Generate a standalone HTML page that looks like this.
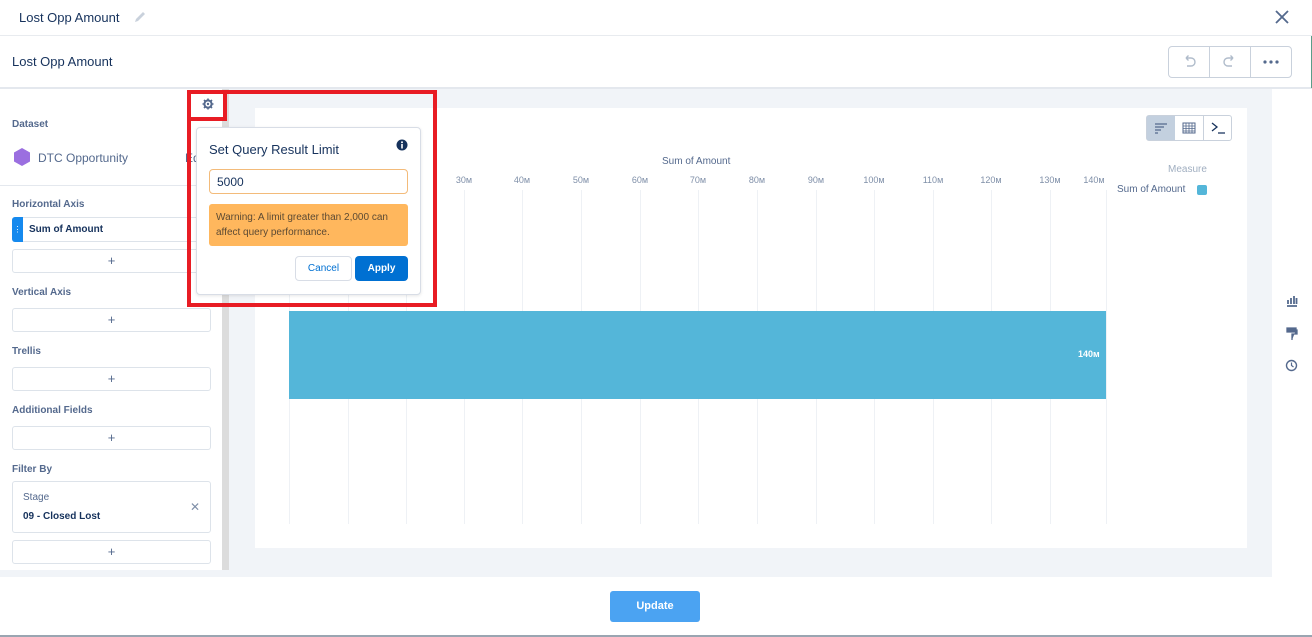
<!DOCTYPE html>
<html><head><meta charset="utf-8"><style>
*{box-sizing:border-box;margin:0;padding:0}
body{width:1312px;height:637px;position:relative;overflow:hidden;background:#fff;font-family:"Liberation Sans",sans-serif;color:#16325c}
.abs{position:absolute}
.lbl{position:absolute;left:12px;font-size:10px;color:#54698d;font-weight:bold}
.box{position:absolute;left:12px;width:199px;border:1px solid #dde3ea;border-radius:3px;background:#fff}
.plus{height:24px;text-align:center;line-height:22px;font-size:13px;color:#54698d}
.grid{position:absolute;top:190px;width:1px;height:334px;background:#eef1f5}
.tick{position:absolute;top:175px;font-size:9px;color:#7f8fa8;width:40px;text-align:center}
</style></head><body>
<div class="abs" style="left:19px;top:10px;font-size:13px;color:#16325c">Lost Opp Amount</div>
<svg class="abs" style="left:134px;top:11px" width="12" height="12" viewBox="0 0 12 12"><path d="M1 11 L2 8 L9 1 L11 3 L4 10 Z" fill="#c9d1dc"/></svg>
<svg class="abs" style="left:1275px;top:10px" width="14" height="14" viewBox="0 0 14 14"><path d="M1 1 L13 13 M13 1 L1 13" stroke="#54698d" stroke-width="1.8"/></svg>
<div class="abs" style="left:0;top:35px;width:1312px;height:1px;background:#e8ebef"></div>
<div class="abs" style="left:12px;top:54px;font-size:13px;color:#16325c">Lost Opp Amount</div>
<div class="abs" style="left:1168px;top:46px;width:124px;height:32px;border:1px solid #c9d1dc;border-radius:4px;background:#fff"></div>
<div class="abs" style="left:1209px;top:46px;width:1px;height:32px;background:#c9d1dc"></div>
<div class="abs" style="left:1250px;top:46px;width:1px;height:32px;background:#c9d1dc"></div>
<svg class="abs" style="left:1181px;top:54px" width="16" height="16" viewBox="0 0 16 16"><path d="M5 4 H10 A4 4 0 0 1 10 12 H6 M5 4 L7.5 1.5 M5 4 L7.5 6.5" stroke="#b0bccb" stroke-width="1.4" fill="none"/></svg>
<svg class="abs" style="left:1222px;top:54px" width="16" height="16" viewBox="0 0 16 16"><path d="M11 4 H6 A4 4 0 0 0 6 12 H10 M11 4 L8.5 1.5 M11 4 L8.5 6.5" stroke="#b0bccb" stroke-width="1.4" fill="none"/></svg>
<svg class="abs" style="left:1262px;top:59px" width="18" height="6"><circle cx="3" cy="3" r="1.6" fill="#54698d"/><circle cx="9" cy="3" r="1.6" fill="#54698d"/><circle cx="15" cy="3" r="1.6" fill="#54698d"/></svg>
<div class="abs" style="left:0;top:87px;width:1312px;height:2px;background:#e4e8ee"></div>
<div class="abs" style="left:0;top:89px;width:1272px;height:488px;background:#f1f4f8"></div>
<div class="abs" style="left:1272px;top:89px;width:40px;height:488px;background:#fff"></div>
<div class="abs" style="left:1311px;top:36px;width:1px;height:52px;background:#5a9e8a"></div>
<div class="abs" style="left:0;top:89px;width:222px;height:481px;background:#fff"></div>
<div class="abs" style="left:222px;top:89px;width:7px;height:481px;background:#dcdcdc"></div>
<div class="lbl" style="top:119px">Dataset</div>
<svg class="abs" style="left:13px;top:147px" width="18" height="20" viewBox="0 0 18 20"><path d="M9 1 L17 5.5 V14.5 L9 19 L1 14.5 V5.5 Z" fill="#9b6fe0"/></svg>
<div class="abs" style="left:38px;top:151px;font-size:12px;color:#54698d">DTC Opportunity</div>
<div class="abs" style="left:185px;top:151px;font-size:12px;color:#54698d">Ed</div>
<div class="abs" style="left:0;top:185px;width:222px;height:1px;background:#e4e8ee"></div>
<div class="lbl" style="top:199px">Horizontal Axis</div>
<div class="box" style="top:217px;height:25px;border-left:none"></div>
<div class="abs" style="left:12px;top:217px;width:11px;height:25px;background:#1589ee;border-radius:3px 0 0 3px;color:#fff;font-size:8px;text-align:center;line-height:25px">⋮</div>
<div class="abs" style="left:29px;top:224px;font-size:10px;font-weight:bold;color:#16325c">Sum of Amount</div>
<div class="box plus" style="top:249px">+</div>
<div class="lbl" style="top:287px">Vertical Axis</div>
<div class="box plus" style="top:308px">+</div>
<div class="lbl" style="top:346px">Trellis</div>
<div class="box plus" style="top:367px">+</div>
<div class="lbl" style="top:405px">Additional Fields</div>
<div class="box plus" style="top:426px">+</div>
<div class="lbl" style="top:464px">Filter By</div>
<div class="box" style="top:481px;height:52px"></div>
<div class="abs" style="left:23px;top:492px;font-size:10px;color:#54698d">Stage</div>
<div class="abs" style="left:23px;top:511px;font-size:10px;color:#16325c;font-weight:bold">09 - Closed Lost</div>
<div class="abs" style="left:190px;top:500px;font-size:12px;color:#7f8fa8">✕</div>
<div class="box plus" style="top:540px">+</div>
<div class="abs" style="left:255px;top:108px;width:992px;height:440px;background:#fff"></div>
<div class="abs" style="left:1146px;top:115px;width:86px;height:26px;border:1px solid #c9d1dc;border-radius:3px;background:#fff"></div>
<div class="abs" style="left:1147px;top:116px;width:28px;height:24px;background:#c3d0df"></div>
<div class="abs" style="left:1203px;top:115px;width:1px;height:26px;background:#c9d1dc"></div>
<svg class="abs" style="left:1154px;top:122px" width="14" height="12"><path d="M1 2H13M1 5H10M1 8H7M1 11H4" stroke="#54698d" stroke-width="1.2"/></svg>
<svg class="abs" style="left:1182px;top:122px" width="14" height="12"><rect x="1" y="1" width="12" height="10" fill="none" stroke="#54698d"/><path d="M1 4H13M1 6.5H13M1 9H13M4 1V11M7 1V11M10 1V11" stroke="#54698d" stroke-width=".8"/></svg>
<svg class="abs" style="left:1210px;top:121px" width="16" height="14"><path d="M2 2 L7 6 L2 10 M8 12 H15" stroke="#16325c" stroke-width="1.3" fill="none"/></svg>
<div class="abs" style="left:662px;top:156px;font-size:10px;color:#54698d">Sum of Amount</div>
<div class="abs" style="left:1168px;top:164px;font-size:10px;color:#a0aec0">Measure</div>
<div class="abs" style="left:1117px;top:184px;font-size:10px;color:#54698d">Sum of Amount</div>
<div class="abs" style="left:1197px;top:185px;width:10px;height:10px;border-radius:2px;background:#54b6d9"></div>
<div class="grid" style="left:289px"></div><div class="grid" style="left:348px"></div><div class="grid" style="left:406px"></div><div class="grid" style="left:464px"></div><div class="grid" style="left:522px"></div><div class="grid" style="left:581px"></div><div class="grid" style="left:640px"></div><div class="grid" style="left:698px"></div><div class="grid" style="left:757px"></div><div class="grid" style="left:816px"></div><div class="grid" style="left:874px"></div><div class="grid" style="left:933px"></div><div class="grid" style="left:991px"></div><div class="grid" style="left:1050px"></div><div class="grid" style="left:1106px"></div>
<div class="tick" style="left:444px">30м</div><div class="tick" style="left:502px">40м</div><div class="tick" style="left:561px">50м</div><div class="tick" style="left:620px">60м</div><div class="tick" style="left:678px">70м</div><div class="tick" style="left:737px">80м</div><div class="tick" style="left:796px">90м</div><div class="tick" style="left:854px">100м</div><div class="tick" style="left:913px">110м</div><div class="tick" style="left:971px">120м</div><div class="tick" style="left:1030px">130м</div><div class="tick" style="left:1074px">140м</div>
<div class="abs" style="left:289px;top:311px;width:817px;height:88px;background:#54b6d9"></div>
<div class="abs" style="left:1078px;top:349px;font-size:9px;color:#fff;font-weight:bold">140м</div>
<svg class="abs" style="left:1286px;top:295px" width="12" height="12"><path d="M1 11H11M2 9V5M5 9V3M8 9V1M10.5 9V3" stroke="#54698d" stroke-width="1.8"/></svg>
<svg class="abs" style="left:1286px;top:327px" width="12" height="14"><path d="M1 1H10V5H1Z M10 3H11V7H6V13" fill="#54698d" stroke="#54698d" stroke-width="1.3"/></svg>
<svg class="abs" style="left:1285px;top:359px" width="13" height="13"><circle cx="6.5" cy="6.5" r="5" fill="none" stroke="#54698d" stroke-width="1.4"/><path d="M6.5 3.5V6.5L8.5 8" stroke="#54698d" stroke-width="1.2" fill="none"/></svg>
<div class="abs" style="left:190px;top:93px;width:33px;height:25px;background:#fff"></div>
<svg class="abs" style="left:202px;top:98px" width="12" height="12" viewBox="0 0 12 12"><circle cx="6" cy="6" r="3.6" fill="none" stroke="#54698d" stroke-width="2"/><path d="M6 0.5V2.5M6 9.5V11.5M0.5 6H2.5M9.5 6H11.5M2 2L3.4 3.4M8.6 8.6L10 10M2 10L3.4 8.6M8.6 3.4L10 2" stroke="#54698d" stroke-width="1.6"/><circle cx="6" cy="6" r="1.2" fill="#54698d"/></svg>
<div class="abs" style="left:187px;top:90px;width:250px;height:217px;border:4px solid #e81c24"></div>
<div class="abs" style="left:187px;top:90px;width:40px;height:31px;border:4px solid #e81c24"></div>
<div class="abs" style="left:196px;top:127px;width:225px;height:168px;background:#fff;border:1px solid #d8dde6;border-radius:4px;box-shadow:0 1px 3px rgba(0,0,0,.1)"></div>
<div class="abs" style="left:209px;top:142px;font-size:13px;color:#16325c">Set Query Result Limit</div>
<svg class="abs" style="left:396px;top:139px" width="12" height="12"><circle cx="6" cy="6" r="5.5" fill="#16325c"/><rect x="5.2" y="5" width="1.6" height="4.5" fill="#fff"/><circle cx="6" cy="3.2" r="1" fill="#fff"/></svg>
<div class="abs" style="left:209px;top:169px;width:199px;height:25px;border:1px solid #f3bb7a;border-radius:4px;font-size:12px;padding:5px 7px;color:#16325c">5000</div>
<div class="abs" style="left:209px;top:204px;width:199px;height:42px;background:#ffb75d;border-radius:3px;font-size:10px;line-height:15px;padding:6px 7px;color:#5c4a33">Warning: A limit greater than 2,000 can affect query performance.</div>
<div class="abs" style="left:295px;top:256px;width:57px;height:25px;border:1px solid #d8dde6;border-radius:4px;font-size:10px;color:#0070d2;text-align:center;line-height:23px">Cancel</div>
<div class="abs" style="left:355px;top:256px;width:53px;height:25px;background:#0070d2;border-radius:4px;font-size:10px;color:#fff;font-weight:bold;text-align:center;line-height:25px">Apply</div>
<div class="abs" style="left:610px;top:591px;width:90px;height:31px;background:#4ba3f2;border-radius:3px;color:#fff;font-size:11px;font-weight:bold;text-align:center;line-height:31px">Update</div>
<div class="abs" style="left:0;top:635px;width:1312px;height:2px;background:#9aa5b1"></div>
</body></html>
